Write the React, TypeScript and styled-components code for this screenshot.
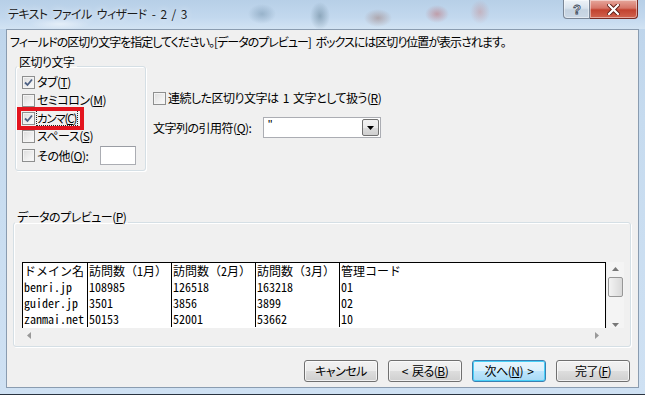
import React from 'react';
import styled, { createGlobalStyle } from 'styled-components';

const GlobalStyle = createGlobalStyle`
  html, body {
    margin: 0;
    padding: 0;
    background: #ffffff;
  }
  body {
    font-family: "Noto Sans CJK JP", "Liberation Sans", sans-serif;
    font-size: 12px;
  }
`;

const Window = styled.div`
  width: 645px;
  height: 395px;
  box-sizing: border-box;
  display: flex;
  flex-direction: column;
  background: linear-gradient(180deg, #bcd3ea 0%, #c6dbef 30%, #cfe1f3 100%);
  border-bottom: 1px solid #2a3440;
  overflow: hidden;
`;

const TitleBar = styled.div`
  height: 29px;
  flex: none;
  display: flex;
  align-items: flex-start;
  padding-left: 8px;
  background:
    radial-gradient(ellipse 14px 10px at 262px 14px, rgba(120,150,175,0.55), transparent),
    radial-gradient(ellipse 10px 14px at 320px 16px, rgba(90,120,140,0.5), transparent),
    radial-gradient(ellipse 14px 9px at 378px 18px, rgba(150,110,100,0.45), transparent),
    radial-gradient(ellipse 12px 9px at 437px 14px, rgba(190,90,90,0.45), transparent),
    radial-gradient(ellipse 10px 12px at 480px 12px, rgba(200,130,130,0.4), transparent),
    radial-gradient(ellipse 30px 6px at 60px 24px, rgba(255,255,255,0.5), transparent),
    linear-gradient(180deg, #b7cfe7 0%, #c2d8ee 60%, #d2e3f3 100%);
`;

const Title = styled.div`
  margin-top: 7px;
  font-size: 12px;
  line-height: 14px;
  color: #1b1b1b;
  font-feature-settings: "palt";
  text-shadow: 0 0 6px rgba(255,255,255,0.9);
  letter-spacing: -0.6px;
  word-spacing: 3px;
`;

const Caption = styled.div`
  margin-left: auto;
  margin-right: 7px;
  display: flex;
`;

const CaptionButton = styled.div<{ $close?: boolean }>`
  height: 19px;
  width: ${p => (p.$close ? '48px' : '27px')};
  box-sizing: border-box;
  border: 1px solid ${p => (p.$close ? '#7a2a22' : '#7b8797')};
  border-top: none;
  border-left: ${p => (p.$close ? 'none' : '1px solid #7b8797')};
  border-radius: ${p => (p.$close ? '0 0 4px 0' : '0 0 0 4px')};
  display: flex;
  align-items: center;
  justify-content: center;
  background: ${p =>
    p.$close
      ? 'linear-gradient(180deg, #e6a79c 0%, #d67567 45%, #c2422f 55%, #d1644f 100%)'
      : 'linear-gradient(180deg, #eef3f8 0%, #d9e3ed 45%, #c4d2e0 55%, #cbd8e6 100%)'};
  box-shadow: inset 0 0 0 1px rgba(255,255,255,0.45);
`;

const Client = styled.div`
  flex: 1;
  margin: 0 6px 7px 6px;
  border: 1px solid #8a9cb0;
  background: #f0f0f0;
  display: flex;
  flex-direction: column;
  padding: 5px 0 5px 0;
  font-size: 12px;
  line-height: 14px;
  color: #000;
  font-feature-settings: "palt";
  letter-spacing: -0.5px;
  word-spacing: 2px;
`;

const Instruction = styled.div`
  padding-left: 3px;
  white-space: nowrap;
  letter-spacing: -1px;
  word-spacing: 3px;
`;

const Key = styled.span`
  text-decoration: underline;
  text-underline-offset: 1px;
`;

const UpperRow = styled.div`
  display: flex;
  align-items: flex-start;
  margin-top: 6px;
`;

const GroupBox = styled.fieldset<{ $width?: string; $height: number }>`
  margin: 0;
  padding: 0;
  border: 1px solid #d5dfe5;
  border-radius: 3px;
  box-shadow: inset 1px 1px 0 #ffffff, 1px 1px 0 #ffffff;
  width: ${p => p.$width || 'auto'};
  height: ${p => p.$height}px;
  box-sizing: border-box;
  min-width: 0;
`;

const Legend = styled.legend<{ $gap: number }>`
  margin-left: 1px;
  padding: 0 2px ${p => p.$gap}px 2px;
  line-height: 14px;
  white-space: nowrap;
`;

const DelimGroup = styled(GroupBox)`
  margin-left: 8px;
`;

const CheckList = styled.div`
  margin-top: -4px;
  padding: 0 9px 0 6px;
  display: flex;
  flex-direction: column;
`;

const CheckRow = styled.label<{ $tall?: boolean }>`
  position: relative;
  display: flex;
  align-items: center;
  height: ${p => (p.$tall ? '21px' : '18px')};
  white-space: nowrap;
`;

const Box = styled.span`
  flex: none;
  width: 13px;
  height: 13px;
  box-sizing: border-box;
  border: 1px solid #8e8f8f;
  background: linear-gradient(135deg, #dcdcdc 0%, #f0f0f0 60%, #fbfbfb 100%);
  box-shadow: inset 0 0 0 1px #f4f4f4;
  margin-right: 2px;
  display: flex;
  align-items: center;
  justify-content: center;
`;

const FocusText = styled.span`
  outline: 1px dotted #222;
  outline-offset: 0px;
  font-size: 11.5px;
  letter-spacing: -1.2px;
  padding-right: 1px;
`;

const Highlight = styled.span`
  position: absolute;
  left: -5px;
  top: -2px;
  width: 67px;
  height: 23px;
  box-sizing: border-box;
  border: 4px solid #e3141e;
  pointer-events: none;
`;

const SmallInput = styled.div`
  margin-left: auto;
  width: 36px;
  height: 19px;
  box-sizing: border-box;
  background: #fff;
  border: 1px solid #abadb3;
  border-top-color: #9a9da4;
`;

const Options = styled.div`
  margin-left: 7px;
  margin-top: 34px;
  display: flex;
  flex-direction: column;
`;

const QuoteRow = styled.div`
  display: flex;
  align-items: center;
  margin-top: 10px;
`;

const QuoteLabel = styled.span`
  width: 110px;
  white-space: nowrap;
`;

const Combo = styled.div`
  width: 118px;
  height: 21px;
  box-sizing: border-box;
  background: #fff;
  border: 1px solid #abadb3;
  display: flex;
  align-items: stretch;
  padding: 1px;
`;

const ComboText = styled.div`
  flex: 1;
  padding-left: 3px;
  font-family: "Liberation Sans", sans-serif;
  font-size: 12px;
  line-height: 12px;
`;

const ComboButton = styled.div`
  width: 17px;
  box-sizing: border-box;
  border: 1px solid #707070;
  border-radius: 2px;
  background: linear-gradient(180deg, #f2f2f2 0%, #ebebeb 50%, #dddddd 51%, #cfcfcf 100%);
  display: flex;
  align-items: center;
  justify-content: center;
`;

const PreviewGroup = styled(GroupBox)`
  margin: 39px 7px 0 6px;
`;

const PreviewInner = styled.div`
  margin-top: 28px;
  padding: 0 6px 0 8px;
  display: grid;
  grid-template-columns: 584px 17px;
  grid-template-rows: 66px 14px;
  column-gap: 1px;
`;

const Table = styled.div`
  background: #fff;
  border: 1px solid #000;
  border-bottom: none;
  box-sizing: border-box;
  overflow: hidden;
  display: grid;
  grid-template-columns: 64px 84px 84px 84px 1fr;
  grid-auto-rows: 16px;
  font-family: "Noto Sans Mono CJK JP", "Noto Sans CJK JP", "Liberation Mono", monospace;
  font-size: 12px;
  line-height: 16px;
  letter-spacing: 0;
  word-spacing: 0;
  font-feature-settings: normal;
`;

const Cell = styled.div<{ $first?: boolean }>`
  border-left: ${p => (p.$first ? 'none' : '1px solid #000')};
  padding-left: 1px;
  white-space: nowrap;
  overflow: hidden;
`;

const VScroll = styled.div`
  background: #f4f4f4;
  display: flex;
  flex-direction: column;
  align-items: center;
  padding-top: 4px;
  box-sizing: border-box;
`;

const Thumb = styled.div`
  margin-top: 4px;
  width: 15px;
  height: 20px;
  box-sizing: border-box;
  border: 1px solid #979797;
  border-radius: 2px;
  background: linear-gradient(90deg, #f3f3f3 0%, #e6e6e6 50%, #d9d9d9 100%);
`;

const Spacer = styled.div`
  flex: 1;
`;

const HScroll = styled.div`
  display: flex;
  align-items: center;
  justify-content: space-between;
  padding: 0 6px 0 4px;
`;

const ButtonRow = styled.div`
  margin-top: 13px;
  padding-right: 8px;
  display: flex;
  justify-content: flex-end;
  gap: 10px;
`;

const Button = styled.div<{ $focused?: boolean }>`
  width: 74px;
  height: 22px;
  box-sizing: border-box;
  border: 1px solid ${p => (p.$focused ? '#3c7fb1' : '#707070')};
  border-radius: 3px;
  background: ${p =>
    p.$focused
      ? 'linear-gradient(180deg, #eaf6fd 0%, #d9f0fc 50%, #bee6fd 51%, #a7d9f5 100%)'
      : 'linear-gradient(180deg, #f2f2f2 0%, #ebebeb 50%, #dddddd 51%, #cfcfcf 100%)'};
  box-shadow: inset 0 0 0 1px ${p => (p.$focused ? '#48d0f8' : 'rgba(255,255,255,0.7)')};
  display: flex;
  align-items: center;
  justify-content: center;
  white-space: nowrap;
  line-height: 14px;
`;

const CheckMark = () => (
  <svg width="9" height="9" viewBox="0 0 9 9">
    <path d="M1 4.5 L3.5 7 L8 1.5" fill="none" stroke="#4d6185" strokeWidth="1.8" />
  </svg>
);

const Check: React.FC<{ checked?: boolean }> = ({ checked }) => (
  <Box>{checked && <CheckMark />}</Box>
);

const Arrow: React.FC<{ dir: 'up' | 'down' | 'left' | 'right'; color?: string; size?: number }> = ({
  dir,
  color = '#5b5b5b',
  size = 7,
}) => {
  const paths = {
    up: 'M0 5 L3.5 1 L7 5 Z',
    down: 'M0 2 L7 2 L3.5 6 Z',
    left: 'M5 0 L5 7 L1 3.5 Z',
    right: 'M2 0 L6 3.5 L2 7 Z',
  };
  return (
    <svg width={size} height={size} viewBox="0 0 7 7">
      <path d={paths[dir]} fill={color} />
    </svg>
  );
};

const rows = [
  ['ドメイン名', '訪問数（1月）', '訪問数（2月）', '訪問数（3月）', '管理コード'],
  ['benri.jp', '108985', '126518', '163218', '01'],
  ['guider.jp', '3501', '3856', '3899', '02'],
  ['zanmai.net', '50153', '52001', '53662', '10'],
];

export default function App() {
  return (
    <>
      <GlobalStyle />
      <Window>
        <TitleBar>
          <Title>テキスト ファイル ウィザード - 2 / 3</Title>
          <Caption>
            <CaptionButton>
              <svg width="10" height="13" viewBox="0 0 10 13">
                <text
                  x="5"
                  y="11"
                  textAnchor="middle"
                  fontFamily="Liberation Sans, sans-serif"
                  fontSize="13"
                  fontWeight="bold"
                  fill="#e9eef4"
                  stroke="#3d4a5a"
                  strokeWidth="0.8"
                >
                  ?
                </text>
              </svg>
            </CaptionButton>
            <CaptionButton $close>
              <svg width="13" height="11" viewBox="0 0 13 11">
                <path d="M2 1 L11 10 M11 1 L2 10" stroke="#5a1a12" strokeWidth="4" strokeLinecap="square" />
                <path d="M2 1 L11 10 M11 1 L2 10" stroke="#ffffff" strokeWidth="2.2" strokeLinecap="square" />
              </svg>
            </CaptionButton>
          </Caption>
        </TitleBar>

        <Client>
          <Instruction>
            フィールドの区切り文字を指定してください。[データのプレビュー] ボックスには区切り位置が表示されます。
          </Instruction>

          <UpperRow>
            <DelimGroup $width="131px" $height={116}>
              <Legend $gap={8}>区切り文字</Legend>
              <CheckList>
                <CheckRow>
                  <Check checked />
                  タブ(<Key>T</Key>)
                </CheckRow>
                <CheckRow>
                  <Check />
                  セミコロン(<Key>M</Key>)
                </CheckRow>
                <CheckRow>
                  <Check checked />
                  <FocusText>
                    カンマ(<Key>C</Key>)
                  </FocusText>
                  <Highlight />
                </CheckRow>
                <CheckRow>
                  <Check />
                  スペース(<Key>S</Key>)
                </CheckRow>
                <CheckRow $tall>
                  <Check />
                  その他(<Key>O</Key>):
                  <SmallInput />
                </CheckRow>
              </CheckList>
            </DelimGroup>

            <Options>
              <CheckRow>
                <Check />
                連続した区切り文字は 1 文字として扱う(<Key>R</Key>)
              </CheckRow>
              <QuoteRow>
                <QuoteLabel>
                  文字列の引用符(<Key>Q</Key>):
                </QuoteLabel>
                <Combo>
                  <ComboText>"</ComboText>
                  <ComboButton>
                    <Arrow dir="down" color="#000" />
                  </ComboButton>
                </Combo>
              </QuoteRow>
            </Options>
          </UpperRow>

          <PreviewGroup $height={137}>
            <Legend $gap={10}>
              データのプレビュー(<Key>P</Key>)
            </Legend>
            <PreviewInner>
              <Table>
                {rows.map((row, r) =>
                  row.map((cell, c) => (
                    <Cell key={`${r}-${c}`} $first={c === 0}>
                      {cell}
                    </Cell>
                  ))
                )}
              </Table>
              <VScroll>
                <Arrow dir="up" color="#777" />
                <Thumb />
                <Spacer />
                <Arrow dir="down" color="#777" />
              </VScroll>
              <HScroll>
                <Arrow dir="left" color="#999" />
                <Arrow dir="right" color="#999" />
              </HScroll>
            </PreviewInner>
          </PreviewGroup>

          <ButtonRow>
            <Button>キャンセル</Button>
            <Button>
              &lt; 戻る(<Key>B</Key>)
            </Button>
            <Button $focused>
              次へ(<Key>N</Key>) &gt;
            </Button>
            <Button>
              完了(<Key>F</Key>)
            </Button>
          </ButtonRow>
        </Client>
      </Window>
    </>
  );
}
